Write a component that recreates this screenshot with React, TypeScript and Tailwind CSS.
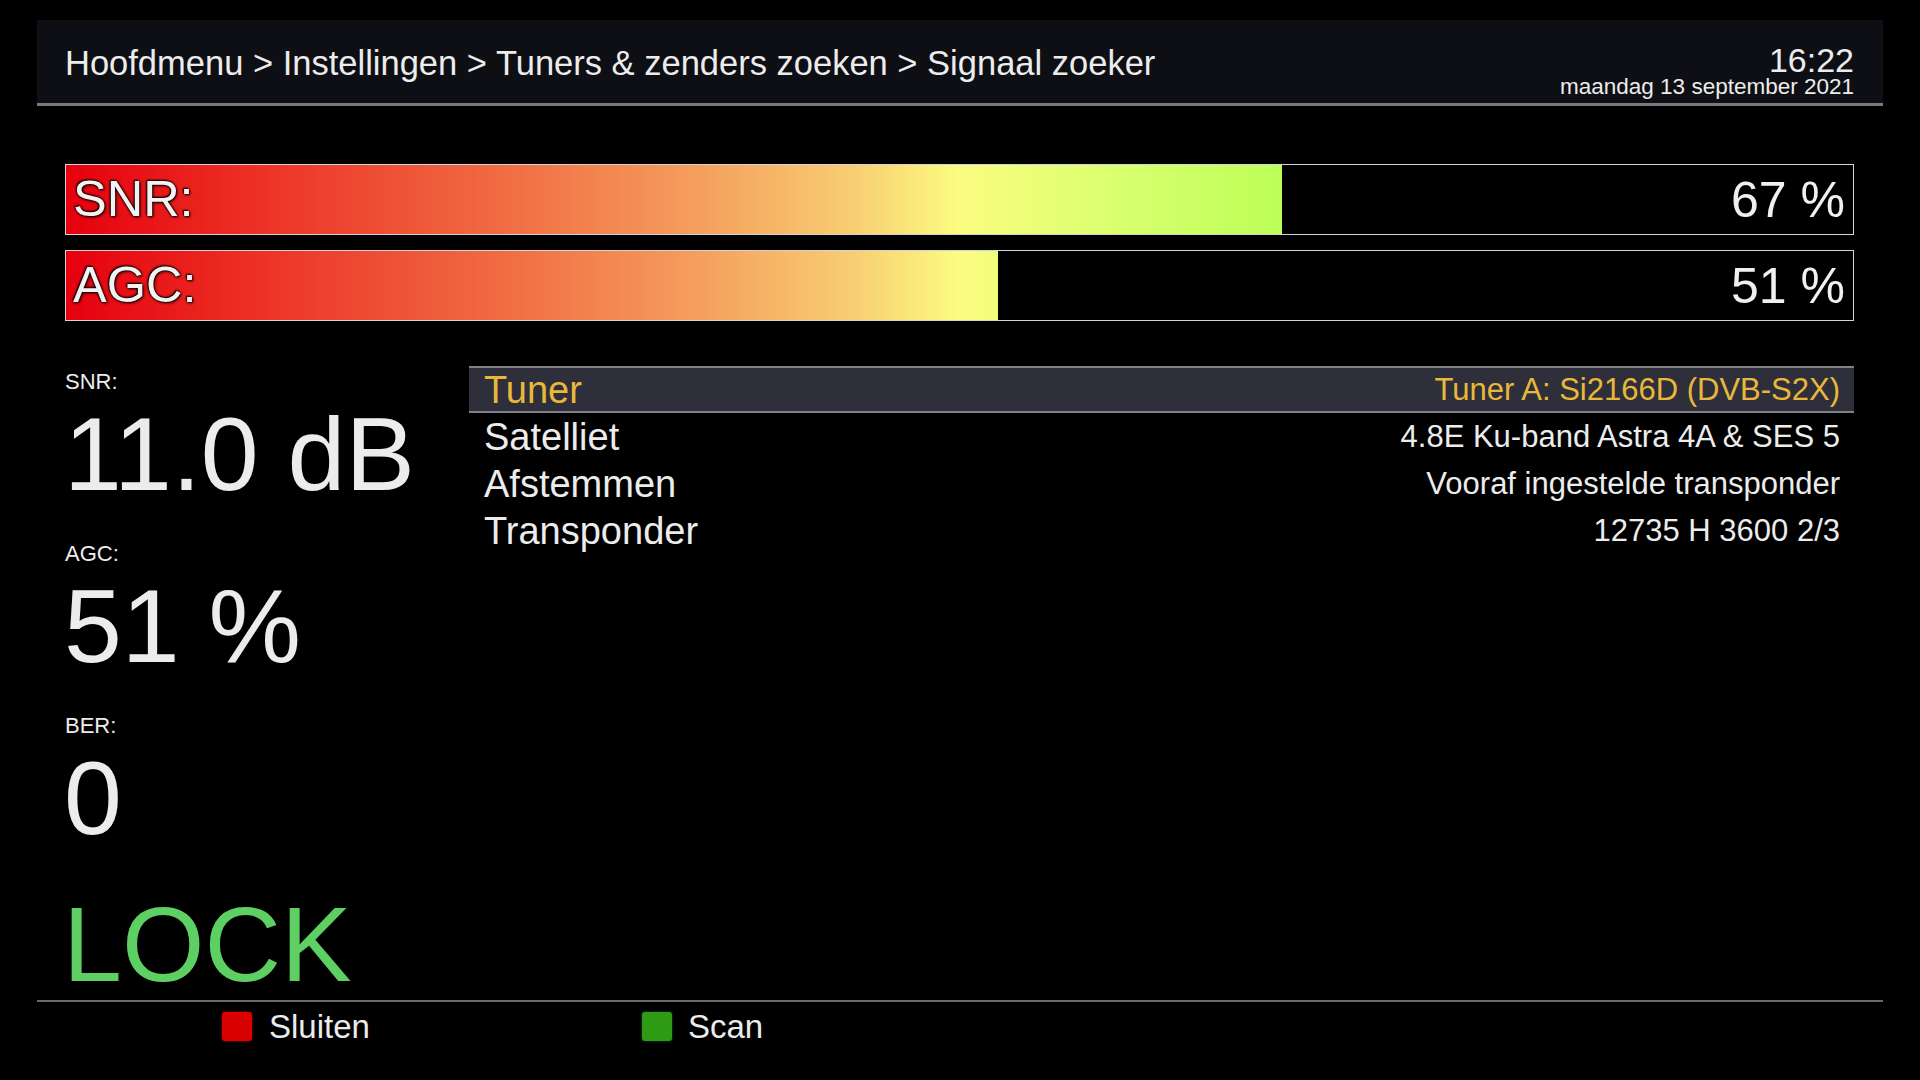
import React from "react";

const bars = [
  { label: "SNR:", value: "67 %", fill: 1216 },
  { label: "AGC:", value: "51 %", fill: 932 },
];

const stats = [
  { label: "SNR:", value: "11.0 dB" },
  { label: "AGC:", value: "51 %" },
  { label: "BER:", value: "0" },
];

const rows = [
  { name: "Tuner", value: "Tuner A: Si2166D (DVB-S2X)", active: true },
  { name: "Satelliet", value: "4.8E Ku-band Astra 4A & SES 5" },
  { name: "Afstemmen", value: "Vooraf ingestelde transponder" },
  { name: "Transponder", value: "12735 H 3600 2/3" },
];

export default function App() {
  return (
    <div className="w-[1920px] h-[1080px] bg-black text-[#ececec] font-['Liberation_Sans',Arial,sans-serif] pt-[20px] overflow-hidden">
      {/* header */}
      <div className="mx-[37px] h-[86px] bg-[#0e0f14] border-b-[3px] border-[#7a7a7a] flex justify-between pl-[28px] pr-[29px]">
        <div className="pt-[26px] text-[34.5px] leading-none">
          Hoofdmenu &gt; Instellingen &gt; Tuners &amp; zenders zoeken &gt; Signaal zoeker
        </div>
        <div className="pt-[24px] flex flex-col items-end">
          <span className="text-[34px] leading-[32px]">16:22</span>
          <span className="text-[22.5px] leading-[21px]">maandag 13 september 2021</span>
        </div>
      </div>

      {/* bars */}
      <div className="mx-[65px] w-[1789px] mt-[58px] flex flex-col gap-[15px]">
        {bars.map((b) => (
          <div key={b.label} className="relative h-[71px] border border-[#d4d4d4] bg-black flex items-center justify-between">
            <div className="absolute left-0 top-0 h-full overflow-hidden" style={{ width: b.fill }}>
              <div className="w-[1787px] h-full bg-[linear-gradient(to_right,#e6000e_0%,#ec2e24_10%,#f06a42_24%,#f4985a_34%,#f8cd72_44%,#fbfc80_50%,#dcff70_58%,#bcff58_68%,#78ff28_100%)]" />
            </div>
            <span className="relative pl-[7px] text-[50.5px] leading-none text-[#f2f2f2] [text-shadow:0_0_2px_#000,1px_1px_3px_#000,-1px_-1px_2px_#000]">
              {b.label}
            </span>
            <span className="relative pr-[8px] text-[50px] leading-none text-[#f0f0f0]">{b.value}</span>
          </div>
        ))}
      </div>

      {/* main */}
      <div className="mt-[45px] h-[634px] flex">
        <div className="w-[404px] ml-[65px] pt-[5px] flex flex-col">
          {stats.map((s, i) => (
            <div key={s.label} className={i > 0 ? "mt-[37px]" : ""}>
              <div className="text-[22px] leading-none">{s.label}</div>
              <div className="mt-[9px] -ml-[1px] text-[104px] leading-none">{s.value}</div>
            </div>
          ))}
          <div className="mt-[41px] -ml-[2px] text-[106px] leading-none text-[#5ecf63]">LOCK</div>
        </div>

        <div className="w-[1385px] flex flex-col">
          {rows.map((r) => (
            <div
              key={r.name}
              className={
                r.active
                  ? "h-[47px] flex items-center justify-between pl-[15px] pr-[14px] bg-[#2e2f3a] border-y-2 border-[#80808a] text-[#e8b83a]"
                  : "h-[47px] flex items-center justify-between pl-[15px] pr-[14px]"
              }
            >
              <span className="text-[38px] leading-none">{r.name}</span>
              <span className="text-[31px] leading-none">{r.value}</span>
            </div>
          ))}
        </div>
      </div>

      {/* footer */}
      <div className="mx-[37px] border-t-2 border-[#6b6b6b] h-[50px] flex items-center">
        <div className="ml-[185px] w-[420px] flex items-center">
          <span className="w-[30px] h-[29px] rounded-[3px] bg-[#d80000] shadow-[0_0_3px_#800]" />
          <span className="ml-[17px] text-[33px] leading-none">Sluiten</span>
        </div>
        <div className="flex items-center">
          <span className="w-[30px] h-[29px] rounded-[3px] bg-[#2f9a14] shadow-[0_0_3px_#153]" />
          <span className="ml-[16px] text-[33px] leading-none">Scan</span>
        </div>
      </div>
    </div>
  );
}
